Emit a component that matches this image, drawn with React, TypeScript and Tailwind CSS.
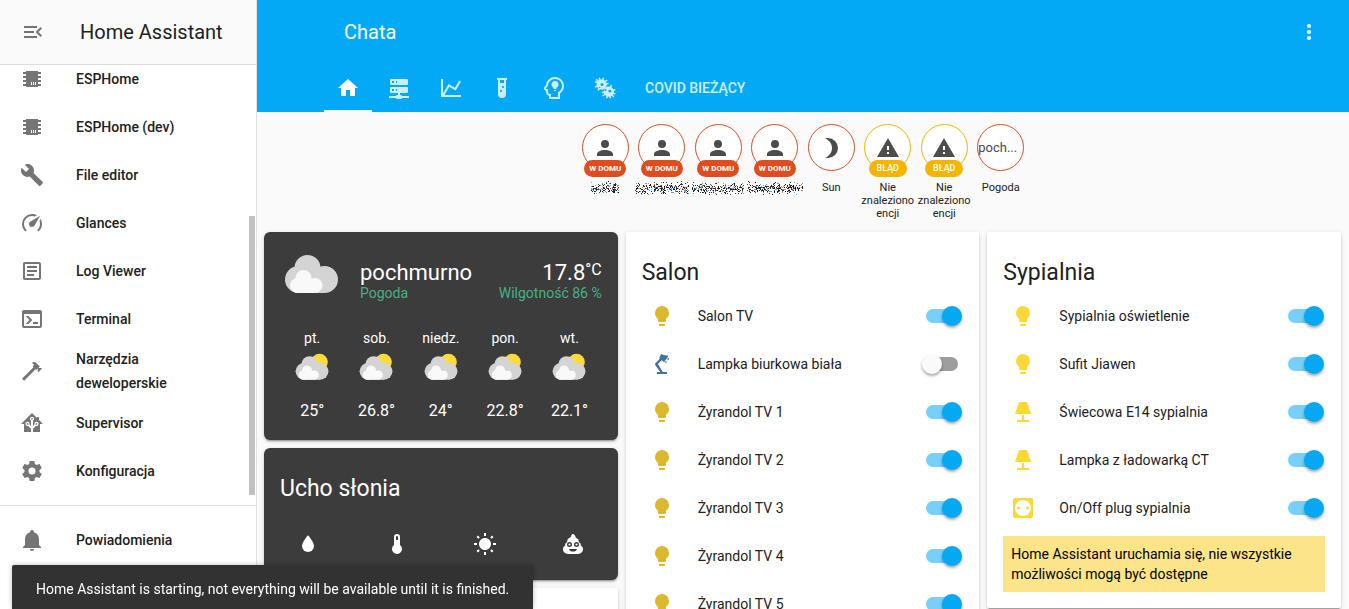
import React, { useState } from "react";

const icons = {
  menuOpen:
    "M21,15.61L19.59,17L14.58,12L19.59,7L21,8.39L17.44,12L21,15.61M3,6H16V8H3V6M3,13V11H13V13H3M3,18V16H16V18H3Z",
  chip: "M6,4H18V5H21V7H18V9H21V11H18V13H21V15H18V17H21V19H18V20H6V19H3V17H6V15H3V13H6V11H3V9H6V7H3V5H6V4M11,15V18H12V15H11M13,15V18H14V15H13M15,15V18H16V15H15Z",
  wrench:
    "M22.7,19L13.6,9.9C14.5,7.6 14,4.9 12.1,3C10.1,1 7.1,0.6 4.7,1.7L9,6L6,9L1.6,4.7C0.4,7.1 0.9,10.1 2.9,12.1C4.8,14 7.5,14.5 9.8,13.6L18.9,22.7C19.3,23.1 19.9,23.1 20.3,22.7L22.6,20.4C23.1,20 23.1,19.3 22.7,19Z",
  gauge:
    "M12,16A3,3 0 0,1 9,13C9,11.88 9.61,10.9 10.5,10.39L20.21,4.77L14.68,14.35C14.18,15.33 13.17,16 12,16M12,3C13.81,3 15.5,3.5 16.97,4.32L14.87,5.53C14,5.19 13,5 12,5A8,8 0 0,0 4,13C4,15.21 4.89,17.21 6.34,18.65H6.35C6.74,19.04 6.74,19.67 6.35,20.06C5.96,20.45 5.32,20.45 4.93,20.07V20.07C3.12,18.26 2,15.76 2,13A10,10 0 0,1 12,3M22,13C22,15.76 20.88,18.26 19.07,20.07V20.07C18.68,20.45 18.05,20.45 17.66,20.06C17.27,19.67 17.27,19.04 17.66,18.65V18.65C19.11,17.2 20,15.21 20,13C20,12 19.81,11 19.46,10.1L20.67,8C21.5,9.5 22,11.18 22,13Z",
  log: "M5,3C3.89,3 3,3.89 3,5V19C3,20.11 3.89,21 5,21H19C20.11,21 21,20.11 21,19V5C21,3.89 20.11,3 19,3H5M5,5H19V19H5V5M7,7V9H17V7H7M7,11V13H17V11H7M7,15V17H14V15H7Z",
  terminal:
    "M20,19V7H4V19H20M20,3A2,2 0 0,1 22,5V19A2,2 0 0,1 20,21H4A2,2 0 0,1 2,19V5C2,3.89 2.9,3 4,3H20M13,17V15H18V17H13M9.58,13L5.57,9H8.4L11.7,12.3C12.09,12.69 12.09,13.33 11.7,13.72L8.42,17H5.59L9.58,13Z",
  hammer:
    "M2,19.63L13.43,8.2L12.72,7.5L14.14,6.07L12,3.89C13.2,2.7 15.09,2.7 16.27,3.89L19.87,7.5L18.45,8.91H21.29L22,9.62L18.45,13.21L17.74,12.5V9.62L16.27,11.04L15.56,10.33L4.13,21.76L2,19.63Z",
  supervisor:
    "M21.8,13H20V21H13V17.67L15.79,14.88L16.5,15C17.66,15 18.6,14.06 18.6,12.9C18.6,11.74 17.66,10.8 16.5,10.8A2.1,2.1 0 0,0 14.4,12.9L14.5,13.61L13,15.13V9.65C13.66,9.29 14.1,8.6 14.1,7.8A2.1,2.1 0 0,0 12,5.7A2.1,2.1 0 0,0 9.9,7.8C9.9,8.6 10.34,9.29 11,9.65V15.13L9.5,13.61L9.6,12.9A2.1,2.1 0 0,0 7.5,10.8A2.1,2.1 0 0,0 5.4,12.9A2.1,2.1 0 0,0 7.5,15L8.21,14.88L11,17.67V21H4V13H2.25C1.83,13 1.42,13 1.42,12.79C1.43,12.57 1.85,12.15 2.28,11.72L11,3C11.33,2.67 11.67,2.33 12,2.33C12.33,2.33 12.67,2.67 13,3L17,7V6H19V9L21.78,11.78C22.18,12.18 22.59,12.59 22.6,12.8C22.6,13 22.2,13 21.8,13M7.5,12A0.9,0.9 0 0,1 8.4,12.9A0.9,0.9 0 0,1 7.5,13.8A0.9,0.9 0 0,1 6.6,12.9A0.9,0.9 0 0,1 7.5,12M16.5,12C17,12 17.4,12.4 17.4,12.9C17.4,13.4 17,13.8 16.5,13.8A0.9,0.9 0 0,1 15.6,12.9A0.9,0.9 0 0,1 16.5,12M12,6.9C12.5,6.9 12.9,7.3 12.9,7.8C12.9,8.3 12.5,8.7 12,8.7C11.5,8.7 11.1,8.3 11.1,7.8C11.1,7.3 11.5,6.9 12,6.9Z",
  cog: "M12,15.5A3.5,3.5 0 0,1 8.5,12A3.5,3.5 0 0,1 12,8.5A3.5,3.5 0 0,1 15.5,12A3.5,3.5 0 0,1 12,15.5M19.43,12.97C19.47,12.65 19.5,12.33 19.5,12C19.5,11.67 19.47,11.34 19.43,11L21.54,9.37C21.73,9.22 21.78,8.95 21.66,8.73L19.66,5.27C19.54,5.05 19.27,4.96 19.05,5.05L16.56,6.05C16.04,5.66 15.5,5.32 14.87,5.07L14.5,2.42C14.46,2.18 14.25,2 14,2H10C9.75,2 9.54,2.18 9.5,2.42L9.13,5.07C8.5,5.32 7.96,5.66 7.44,6.05L4.95,5.05C4.73,4.96 4.46,5.05 4.34,5.27L2.34,8.73C2.21,8.95 2.27,9.22 2.46,9.37L4.57,11C4.53,11.34 4.5,11.67 4.5,12C4.5,12.33 4.53,12.65 4.57,12.97L2.46,14.63C2.27,14.78 2.21,15.05 2.34,15.27L4.34,18.73C4.46,18.95 4.73,19.03 4.95,18.95L7.44,17.94C7.96,18.34 8.5,18.68 9.13,18.93L9.5,21.58C9.54,21.82 9.75,22 10,22H14C14.25,22 14.46,21.82 14.5,21.58L14.87,18.93C15.5,18.67 16.04,18.34 16.56,17.94L19.05,18.95C19.27,19.03 19.54,18.95 19.66,18.73L21.66,15.27C21.78,15.05 21.73,14.78 21.54,14.63L19.43,12.97Z",
  bell: "M21,19V20H3V19L5,17V11C5,7.9 7.03,5.17 10,4.29C10,4.19 10,4.1 10,4A2,2 0 0,1 12,2A2,2 0 0,1 14,4C14,4.1 14,4.19 14,4.29C16.97,5.17 19,7.9 19,11V17L21,19M14,21A2,2 0 0,1 12,23A2,2 0 0,1 10,21",
  dots: "M12,16A2,2 0 0,1 14,18A2,2 0 0,1 12,20A2,2 0 0,1 10,18A2,2 0 0,1 12,16M12,10A2,2 0 0,1 14,12A2,2 0 0,1 12,14A2,2 0 0,1 10,12A2,2 0 0,1 12,10M12,4A2,2 0 0,1 14,6A2,2 0 0,1 12,8A2,2 0 0,1 10,6A2,2 0 0,1 12,4Z",
  home: "M10,20V14H14V20H19V12H22L12,3L2,12H5V20H10Z",
  server:
    "M13,19H14A1,1 0 0,1 15,20H22V22H15A1,1 0 0,1 14,23H10A1,1 0 0,1 9,22H2V20H9A1,1 0 0,1 10,19H11V17H4A1,1 0 0,1 3,16V12A1,1 0 0,1 4,11H20A1,1 0 0,1 21,12V16A1,1 0 0,1 20,17H13V19M4,3H20A1,1 0 0,1 21,4V8A1,1 0 0,1 20,9H4A1,1 0 0,1 3,8V4A1,1 0 0,1 4,3M9,7H10V5H9V7M9,15H10V13H9V15M5,5V7H7V5H5M5,13V15H7V13H5Z",
  chart:
    "M16,11.78L20.24,4.45L21.97,5.45L16.74,14.5L10.23,10.75L5.46,19H22V21H2V3H4V17.54L9.5,8L16,11.78Z",
  tube: "M7,2V4H8V18A4,4 0 0,0 12,22A4,4 0 0,0 16,18V4H17V2H7M11,16C10.4,16 10,15.6 10,15C10,14.4 10.4,14 11,14C11.6,14 12,14.4 12,15C12,15.6 11.6,16 11,16M13,12C12.4,12 12,11.6 12,11C12,10.4 12.4,10 13,10C13.6,10 14,10.4 14,11C14,11.6 13.6,12 13,12M14,7H10V4H14V7Z",
  head: "M13,3C16.88,3 20,6.14 20,10C20,12.8 18.37,15.19 16,16.31V21H9V18H8C6.89,18 6,17.11 6,16V13H4.5C4.08,13 3.84,12.5 4.08,12.19L6,9.66C6.19,5.95 9.23,3 13,3M13,1C8.41,1 4.61,4.42 4.06,8.9L2.5,11L2.45,11.03C1.9,11.79 1.83,12.79 2.26,13.62C2.62,14.31 3.26,14.79 4,14.94V16C4,17.85 5.28,19.42 7,19.87V23H18V17.5C20.5,15.83 22,13.06 22,10C22,5.03 17.96,1 13,1M13,5A3.5,3.5 0 0,0 9.5,8.5C9.5,9.9 10.3,11.1 11.5,11.7V13H14.5V11.7C15.7,11.1 16.5,9.9 16.5,8.5A3.5,3.5 0 0,0 13,5M12,14V15H14V14H12Z",
  account:
    "M12,4A4,4 0 0,1 16,8A4,4 0 0,1 12,12A4,4 0 0,1 8,8A4,4 0 0,1 12,4M12,14C16.42,14 20,15.79 20,18V20H4V18C4,15.79 7.58,14 12,14Z",
  moon: "M9,2C7.95,2 6.95,2.16 6,2.46C10.06,3.73 13,7.5 13,12C13,16.5 10.06,20.27 6,21.54C6.95,21.84 7.95,22 9,22A10,10 0 0,0 19,12A10,10 0 0,0 9,2Z",
  alert: "M13,14H11V10H13M13,18H11V16H13M1,21H23L12,2L1,21Z",
  water:
    "M12,20A6,6 0 0,1 6,14C6,10 12,3.25 12,3.25C12,3.25 18,10 18,14A6,6 0 0,1 12,20Z",
  thermometer:
    "M15,13V5A3,3 0 0,0 9,5V13A5,5 0 1,0 15,13M12,4A1,1 0 0,1 13,5V8H11V5A1,1 0 0,1 12,4Z",
  sunny:
    "M3.55,19.09L4.96,20.5L6.76,18.71L5.34,17.29M12,6C8.69,6 6,8.69 6,12S8.69,18 12,18 18,15.31 18,12C18,8.68 15.31,6 12,6M20,13H23V11H20M17.24,18.71L19.04,20.5L20.45,19.09L18.66,17.29M20.45,5L19.04,3.6L17.24,5.39L18.66,6.81M13,1H11V4H13M6.76,5.39L4.96,3.6L3.55,5L5.34,6.81L6.76,5.39M1,13H4V11H1M13,20H11V23H13",
  poop: "M11.4,2C10.6,2 10.4,3.2 10.2,4.2C9.9,5.3 8.6,5.6 7.5,6.6C6.4,7.6 6,8.9 6.2,10.2C4.6,10.6 3.9,12 4.3,13.6C2.7,14.3 2,15.8 2,17.3C2,20 4.4,22 7.2,22H16.8C19.6,22 22,20 22,17.3C22,15.8 21.3,14.3 19.7,13.6C20.1,12 19.4,10.6 17.8,10.2C18.1,8 16.9,6.3 14.9,5.9C14.6,4 13.2,2 11.4,2M8.5,10A2.5,2.5 0 0,1 8.5,15A2.5,2.5 0 0,1 8.5,10M15.5,10A2.5,2.5 0 0,1 15.5,15A2.5,2.5 0 0,1 15.5,10M8.5,11.4A1.1,1.1 0 0,0 8.5,13.6A1.1,1.1 0 0,0 8.5,11.4M15.5,11.4A1.1,1.1 0 0,0 15.5,13.6A1.1,1.1 0 0,0 15.5,11.4M8,17H16C15.4,18.8 14,19.6 12,19.6C10,19.6 8.6,18.8 8,17Z",
  bulb: "M12,2A7,7 0 0,0 5,9C5,11.38 6.19,13.47 8,14.74V17A1,1 0 0,0 9,18H15A1,1 0 0,0 16,17V14.74C17.81,13.47 19,11.38 19,9A7,7 0 0,0 12,2M9,21A1,1 0 0,0 10,22H14A1,1 0 0,0 15,21V20H9V21Z",
  deskLamp:
    "M7,20H10.2L5.4,13.2C4.9,12.4 5,11.6 5.6,11L9.8,6.8L9.3,5.6L11.2,2L13.5,3L18.6,3.8L14.2,10.2L11.6,8.2L8,12L12.8,20H17V22H7V20M17.6,6.6L19.2,5.4L18.9,7.4L17.3,8.4M15.6,9.4L17,9.2L16.4,10.8L15,11",
  lamp: "M8,2H16L20,14H4L8,2M11,15H13V20H18V22H6V20H11V15Z",
  socket:
    "M4.22,2H19.78C21,2 22,3 22,4.22V19.78C22,21 21,22 19.78,22H4.22C3,22 2,21 2,19.78V4.22C2,3 3,2 4.22,2M12,4A8,8 0 0,0 4,12A8,8 0 0,0 12,20A8,8 0 0,0 20,12A8,8 0 0,0 12,4M7.5,10.5A1.5,1.5 0 0,1 7.5,13.5A1.5,1.5 0 0,1 7.5,10.5M16.5,10.5A1.5,1.5 0 0,1 16.5,13.5A1.5,1.5 0 0,1 16.5,10.5Z",
};

type IconName = keyof typeof icons;

function Icon({ name, className = "size-6" }: { name: IconName; className?: string }) {
  return (
    <svg viewBox="0 0 24 24" className={className} fill="currentColor" fillRule="evenodd" aria-hidden="true">
      <path d={icons[name]} />
    </svg>
  );
}

function GermsIcon() {
  return (
    <svg viewBox="0 0 24 24" className="size-6" aria-hidden="true">
      <g className="text-[#cdeefd]" stroke="currentColor" strokeWidth="1.5" fill="none">
        <path d="M8.5,8.5L6.2,1.8M8.5,8.5L2,5.5M8.5,8.5L2,11M8.5,8.5L3.2,3.2M8.5,8.5L10.5,1.8M8.5,8.5L14.2,4M8.5,8.5L5,14.5M8.5,8.5L15.5,7.5" />
        <path d="M15.8,15.6L18.5,9M15.8,15.6L22.3,13.5M15.8,15.6L22.3,18M15.8,15.6L20.8,21M15.8,15.6L17.5,22.3M15.8,15.6L13.5,22.3M15.8,15.6L9.5,20M15.8,15.6L8.8,16.5" />
      </g>
      <circle cx="8.7" cy="8.6" r="5.1" fill="#cdeefd" />
      <circle cx="15.8" cy="15.6" r="5.1" fill="#cdeefd" />
      <g fill="#03a9f4">
        <circle cx="9" cy="8.5" r="1.5" />
        <circle cx="6.7" cy="11.4" r="0.7" />
        <circle cx="16.8" cy="15.2" r="1.4" />
        <circle cx="12.5" cy="14" r="1" />
      </g>
    </svg>
  );
}

function CloudShape() {
  return (
    <>
      <g fill="#d4d4d4">
        <circle cx="27.5" cy="27" r="13" />
        <circle cx="44.5" cy="38.5" r="13.5" />
        <circle cx="18.5" cy="38.5" r="13.5" />
        <rect x="18.5" y="30" width="26" height="22" />
      </g>
      <g fill="#f9f9f9">
        <circle cx="23.5" cy="37" r="8" />
        <circle cx="17.5" cy="44.5" r="7.5" />
        <circle cx="35" cy="44.5" r="7.5" />
        <rect x="17.5" y="38" width="17.5" height="14" />
      </g>
    </>
  );
}

function Cloudy() {
  return (
    <svg viewBox="0 0 64 64" className="size-16 shrink-0" aria-hidden="true">
      <CloudShape />
    </svg>
  );
}

function PartlyCloudy() {
  return (
    <svg viewBox="0 0 40 40" className="size-10" aria-hidden="true">
      <circle cx="27.5" cy="14" r="8.3" fill="#fdd93c" />
      <g transform="translate(0.5 -0.5) scale(0.62)">
        <CloudShape />
      </g>
    </svg>
  );
}

/* Speckled strip that stands in for a hidden name. */
function HiddenName({ width, seed }: { width: number; seed: number }) {
  const colors = ["#111", "#222", "#333", "#5b9be0", "#c98a5a", "#444", "#1a1a3a"];
  let s = seed * 7919;
  const next = () => {
    s = (s * 1103515245 + 12345) % 2147483648;
    return s / 2147483648;
  };
  const dots = Array.from({ length: width * 5 }, () => ({
    x: Math.floor(next() * width),
    y: Math.floor(((next() + next() + next()) / 3) * 15),
    c: colors[Math.floor(next() * colors.length)],
  }));
  return (
    <svg width={width} height="14" viewBox={`0 0 ${width} 14`} className="shrink-0" shapeRendering="crispEdges" aria-hidden="true">
      {dots.map((d, i) => (
        <rect key={i} x={d.x} y={d.y} width="1" height="1" fill={d.c} />
      ))}
    </svg>
  );
}

const menu: { icon: IconName; label: string }[] = [
  { icon: "chip", label: "ESPHome" },
  { icon: "chip", label: "ESPHome (dev)" },
  { icon: "wrench", label: "File editor" },
  { icon: "gauge", label: "Glances" },
  { icon: "log", label: "Log Viewer" },
  { icon: "terminal", label: "Terminal" },
  { icon: "hammer", label: "Narzędzia deweloperskie" },
  { icon: "supervisor", label: "Supervisor" },
  { icon: "cog", label: "Konfiguracja" },
];

function MenuItem({ icon, label }: { icon: IconName; label: string }) {
  return (
    <a href="#" className="flex min-h-12 shrink-0 items-center gap-8 py-1 pr-16 pl-5 text-[#212121]">
      <Icon name={icon} className="size-6 shrink-0 text-[#757575]" />
      <span className="text-sm leading-6 font-medium">{label}</span>
    </a>
  );
}

function Sidebar() {
  return (
    <aside className="relative flex w-[257px] shrink-0 flex-col border-r border-[#e0e0e0] bg-white">
      <div className="flex h-[65px] shrink-0 items-center gap-[35px] border-b border-[#dcdcdc] bg-[#fafafa] pl-[21px]">
        <button aria-label="Zwiń menu" className="text-[#757575]">
          <Icon name="menuOpen" />
        </button>
        <h1 className="text-xl text-[#212121]">Home Assistant</h1>
      </div>
      <nav className="flex min-h-0 flex-1 flex-col justify-end overflow-hidden pb-[10px]">
        {menu.map((m) => (
          <MenuItem key={m.label} {...m} />
        ))}
      </nav>
      <div className="absolute top-[216px] right-px h-[279px] w-[6px] bg-[#c1c1c1]" />
      <div className="h-[104px] shrink-0 border-t border-[#e0e0e0] pt-[10px]">
        <MenuItem icon="bell" label="Powiadomienia" />
      </div>
    </aside>
  );
}

function Header() {
  const tabs: { label: string; icon: React.ReactNode }[] = [
    { label: "Dom", icon: <Icon name="home" /> },
    { label: "Serwer", icon: <Icon name="server" /> },
    { label: "Wykresy", icon: <Icon name="chart" /> },
    { label: "Testy", icon: <Icon name="tube" /> },
    { label: "Automatyka", icon: <Icon name="head" /> },
    { label: "Wirusy", icon: <GermsIcon /> },
  ];
  return (
    <header className="shrink-0 bg-[#03a9f4] text-white">
      <div className="flex h-16 items-center justify-between pr-7 pl-[87px]">
        <h2 className="text-xl">Chata</h2>
        <button aria-label="Menu">
          <Icon name="dots" />
        </button>
      </div>
      <nav className="flex h-12 pl-[65px]">
        <div className="grid w-[309px] grid-cols-6">
          {tabs.map((t, i) => (
            <a
              key={t.label}
              href="#"
              aria-label={t.label}
              className={
                i === 0
                  ? "mx-[2px] flex items-center justify-center border-b-2 border-white pt-[2px]"
                  : "mx-[2px] flex items-center justify-center text-white/80"
              }
            >
              {t.icon}
            </a>
          ))}
        </div>
        <a href="#" className="flex items-center px-[14px] text-sm font-medium text-white/80 uppercase">
          Covid bieżący
        </a>
      </nav>
    </header>
  );
}

interface BadgeProps {
  children: React.ReactNode;
  tag?: string;
  warn?: boolean;
  caption: React.ReactNode;
}

function Badge({ children, tag, warn, caption }: BadgeProps) {
  return (
    <div className="flex min-w-0 flex-col items-center">
      <div
        className={
          warn
            ? "relative flex size-[47px] items-center justify-center rounded-full border border-[#f4b400] bg-white text-[#4c4c4c]"
            : "relative flex size-[47px] items-center justify-center rounded-full border border-[#df4c1e] bg-white text-[#4c4c4c]"
        }
      >
        {children}
        {tag && (
          <span
            className={
              warn
                ? "absolute -bottom-[7px] rounded-full bg-[#f4b400] px-2 text-[9px] leading-[17px] font-medium text-white"
                : "absolute -bottom-[7px] rounded-full bg-[#df4c1e] px-[5px] text-[8px] leading-[17px] font-bold whitespace-nowrap text-white"
            }
          >
            {tag}
          </span>
        )}
      </div>
      <div className="mt-[10px] flex w-full justify-center text-center text-[11px] leading-[13px] text-[#212121]">
        {caption}
      </div>
    </div>
  );
}

function Badges() {
  return (
    <div className="mx-auto grid w-[452px] grid-cols-8 pt-3">
      {[28, 54, 52, 56].map((w, i) => (
        <Badge key={i} tag="W DOMU" caption={<HiddenName width={w} seed={i + 3} />}>
          <Icon name="account" />
        </Badge>
      ))}
      <Badge caption="Sun">
        <Icon name="moon" />
      </Badge>
      {[0, 1].map((i) => (
        <Badge key={i} warn tag="BŁĄD" caption="Nie znaleziono encji">
          <Icon name="alert" />
        </Badge>
      ))}
      <Badge caption="Pogoda">
        <span className="w-full text-[13px]">poch...</span>
      </Badge>
    </div>
  );
}

const shadow =
  "shadow-[0_2px_2px_0_rgba(0,0,0,0.14),0_1px_5px_0_rgba(0,0,0,0.12),0_3px_1px_-2px_rgba(0,0,0,0.2)]";

const forecast = [
  ["pt.", "25°"],
  ["sob.", "26.8°"],
  ["niedz.", "24°"],
  ["pon.", "22.8°"],
  ["wt.", "22.1°"],
];

function WeatherCard() {
  return (
    <section className={`rounded-md bg-[#3c3c3c] px-4 pt-[9px] pb-[19px] text-white ${shadow}`}>
      <div className="flex items-center gap-4">
        <Cloudy />
        <div className="flex flex-1 items-end justify-between pt-4">
          <div>
            <div className="text-[22px] leading-6">pochmurno</div>
            <div className="text-sm leading-4 text-[#46b187]">Pogoda</div>
          </div>
          <div className="text-right">
            <div className="flex items-start justify-end text-[22px] leading-6">
              17.8<span className="text-base leading-[18px]">°C</span>
            </div>
            <div className="text-sm leading-4 text-[#46b187]">Wilgotność 86 %</div>
          </div>
        </div>
      </div>
      <div className="grid grid-cols-5 pt-[23px] text-center">
        {forecast.map(([day, temp]) => (
          <div key={day} className="flex flex-col items-center">
            <div className="text-sm leading-5">{day}</div>
            <PartlyCloudy />
            <div className="pt-[13px] text-base leading-5">{temp}</div>
          </div>
        ))}
      </div>
    </section>
  );
}

function PlantCard() {
  return (
    <section className={`h-[132px] rounded-md bg-[#3c3c3c] text-white ${shadow}`}>
      <h3 className="px-4 pt-[25px] text-[23px] leading-8">Ucho słonia</h3>
      <div className="grid grid-cols-4 justify-items-center pt-[27px]">
        <Icon name="water" />
        <Icon name="thermometer" />
        <Icon name="sunny" />
        <Icon name="poop" />
      </div>
    </section>
  );
}

interface Entity {
  icon: IconName;
  name: string;
  on: boolean;
  tint: string;
}

function EntityRow({ icon, name, on, tint }: Entity) {
  const [checked, setChecked] = useState(on);
  const id = `switch-${name.replace(/\W+/g, "-")}`;
  return (
    <div className="flex h-12 items-center pr-px">
      <span className={`flex w-10 shrink-0 justify-center ${tint}`}>
        <Icon name={icon} />
      </span>
      <label htmlFor={id} className="flex-1 pl-4 text-sm text-[#212121]">
        {name}
      </label>
      <span className="relative flex h-5 w-10 items-center justify-center">
        <input
          id={id}
          type="checkbox"
          checked={checked}
          onChange={() => setChecked(!checked)}
          className="peer absolute inset-0 z-10 size-full cursor-pointer opacity-0"
        />
        <span className="h-[14px] w-8 rounded-full bg-[#9e9e9e] peer-checked:bg-[#77cffa]" />
        <span className="absolute top-0 left-0 size-5 rounded-full bg-[#fafafa] shadow-[0_2px_3px_rgba(0,0,0,0.35)] peer-checked:left-5 peer-checked:bg-[#03a9f4]" />
      </span>
    </div>
  );
}

function EntitiesCard({ title, entities, children }: { title: string; entities: Entity[]; children?: React.ReactNode }) {
  return (
    <section className={`rounded-xs bg-white px-4 pb-4 ${shadow}`}>
      <h3 className="pt-[25px] pb-[3px] text-[23px] leading-8 text-[#212121]">{title}</h3>
      {entities.map((e) => (
        <EntityRow key={e.name} {...e} />
      ))}
      {children}
    </section>
  );
}

const dim = "text-[#dab92f]";
const bright = "text-[#fdd835]";

const salon: Entity[] = [
  { icon: "bulb", name: "Salon TV", on: true, tint: dim },
  { icon: "deskLamp", name: "Lampka biurkowa biała", on: false, tint: "text-[#44739e]" },
  { icon: "bulb", name: "Żyrandol TV 1", on: true, tint: dim },
  { icon: "bulb", name: "Żyrandol TV 2", on: true, tint: dim },
  { icon: "bulb", name: "Żyrandol TV 3", on: true, tint: dim },
  { icon: "bulb", name: "Żyrandol TV 4", on: true, tint: dim },
  { icon: "bulb", name: "Żyrandol TV 5", on: true, tint: dim },
];

const sypialnia: Entity[] = [
  { icon: "bulb", name: "Sypialnia oświetlenie", on: true, tint: bright },
  { icon: "bulb", name: "Sufit Jiawen", on: true, tint: bright },
  { icon: "lamp", name: "Świecowa E14 sypialnia", on: true, tint: bright },
  { icon: "lamp", name: "Lampka z ładowarką CT", on: true, tint: bright },
  { icon: "socket", name: "On/Off plug sypialnia", on: true, tint: bright },
];

export default function App() {
  return (
    <div className="flex h-screen overflow-hidden bg-[#fafafa] font-[Roboto,sans-serif]">
      <Sidebar />
      <div className="flex min-w-0 flex-1 flex-col">
        <Header />
        <main className="min-h-0 flex-1 overflow-hidden">
          <Badges />
          <div className="grid grid-cols-3 items-start gap-2 pt-3 pr-2 pl-[7px]">
            <div className="flex flex-col gap-2">
              <WeatherCard />
              <PlantCard />
              <section className={`h-24 rounded-xs bg-white ${shadow}`} />
            </div>
            <EntitiesCard title="Salon" entities={salon} />
            <EntitiesCard title="Sypialnia" entities={sypialnia}>
              <div role="alert" className="mt-1 bg-[#fce588] p-2 text-sm leading-5 text-black">
                Home Assistant uruchamia się, nie wszystkie możliwości mogą być dostępne
              </div>
            </EntitiesCard>
          </div>
        </main>
      </div>
      <div
        role="status"
        className="fixed bottom-0 left-3 h-11 rounded-t-xs bg-[#323232] px-6 pt-[14px] text-sm leading-5 text-white shadow-[0_0_5px_rgba(0,0,0,0.25)]"
      >
        Home Assistant is starting, not everything will be available until it is finished.
      </div>
    </div>
  );
}
